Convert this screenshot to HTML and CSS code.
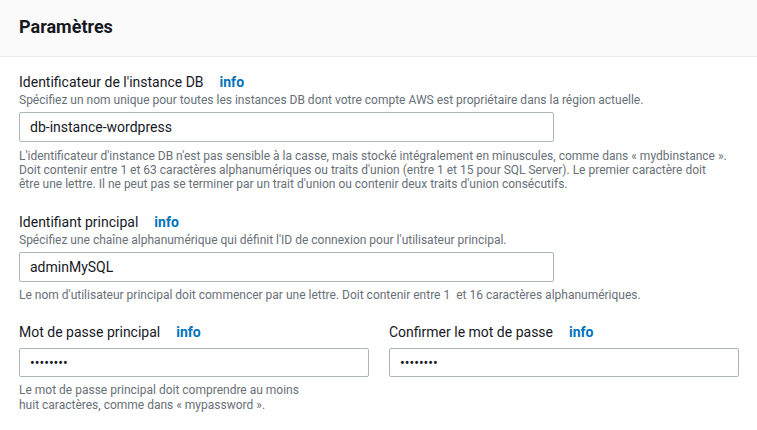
FILE: index.html
```
<!DOCTYPE html>
<html lang="fr">
<head>
<meta charset="utf-8">
<link rel="stylesheet" href="styles.css">
</head>
<body>
<div class="panel">
  <div class="panel-header"><h2 class="title">Paramètres</h2></div>
  <div class="panel-body">
    <div class="field">
      <div class="label">Identificateur de l'instance DB<a class="info">info</a></div>
      <div class="desc">Spécifiez un nom unique pour toutes les instances DB dont votre compte AWS est propriétaire dans la région actuelle.</div>
      <input class="input wide" type="text" value="db-instance-wordpress">
      <div class="constraint">L'identificateur d'instance DB n'est pas sensible à la casse, mais stocké intégralement en minuscules, comme dans « mydbinstance ».<br>Doit contenir entre 1 et 63 caractères alphanumériques ou traits d'union (entre 1 et 15 pour SQL Server). Le premier caractère doit<br>être une lettre. Il ne peut pas se terminer par un trait d'union ou contenir deux traits d'union consécutifs.</div>
    </div>
    <div class="field f2">
      <div class="label">Identifiant principal<a class="info">info</a></div>
      <div class="desc">Spécifiez une chaîne alphanumérique qui définit l'ID de connexion pour l'utilisateur principal.</div>
      <input class="input wide" type="text" value="adminMySQL">
      <div class="constraint">Le nom d'utilisateur principal doit commencer par une lettre. Doit contenir entre 1&nbsp; et 16 caractères alphanumériques.</div>
    </div>
    <div class="cols">
      <div class="field col">
        <div class="label">Mot de passe principal<a class="info">info</a></div>
        <input class="input pw" type="password" value="12345678">
        <div class="constraint pwhelp">Le mot de passe principal doit comprendre au moins<br>huit caractères, comme dans « mypassword ».</div>
      </div>
      <div class="field col">
        <div class="label">Confirmer le mot de passe<a class="info">info</a></div>
        <input class="input pw" type="password" value="12345678">
      </div>
    </div>
  </div>
</div>
</body>
</html>
```
FILE: styles.css
```
html, body {
  margin: 0;
  padding: 0;
  background: #ffffff;
}
body {
  font-family: Roboto, "Liberation Sans", Arial, sans-serif;
  color: #16191f;
  width: 757px;
  height: 430px;
  overflow: hidden;
}
.panel-header {
  background: #fafafa;
  border-bottom: 1px solid #eaeded;
  height: 57px;
  box-sizing: border-box;
  padding: 16px 19px 0;
}
.title {
  margin: 0;
  font-size: 18px;
  line-height: 22px;
  font-weight: 700;
  color: #16191f;
}
.panel-body {
  padding: 15px 19px 0;
}
.field {
  display: flex;
  flex-direction: column;
  align-items: flex-start;
}
.label {
  font-size: 14px;
  line-height: 20px;
  color: #16191f;
}
.info {
  font-weight: 700;
  color: #0073bb;
  margin-left: 16px;
}
.desc {
  font-size: 12px;
  line-height: 16px;
  color: #687078;
}
.input {
  box-sizing: border-box;
  height: 30px;
  border: 1px solid #aab7b8;
  border-radius: 2px;
  margin: 4px 0 0;
  padding: 0 10px;
  font-family: inherit;
  font-size: 14px;
  color: #16191f;
  background: #fff;
  outline: none;
}
.wide {
  width: 535px;
}
.constraint {
  font-size: 12px;
  line-height: 14px;
  color: #687078;
  margin-top: 7px;
}
.f2 {
  margin-top: 21px;
}
.f2 .constraint {
  margin-top: 6px;
}
.cols {
  display: flex;
  gap: 20px;
  margin-top: 20px;
}
.col {
  width: 350px;
}
.pw {
  width: 350px;
  height: 29px;
  margin-top: 6px;
}
.pwhelp {
  line-height: 15px;
  margin-top: 6px;
}
```
